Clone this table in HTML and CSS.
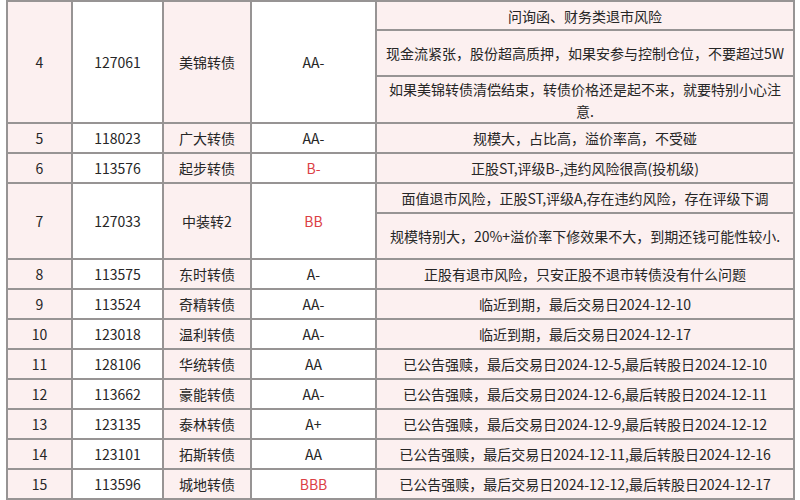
FILE: index.html
```html
<!DOCTYPE html>
<html lang="zh-CN">
<head>
<meta charset="utf-8">
<link rel="stylesheet" href="styles.css">
</head>
<body>
<table class="bonds">
  <colgroup>
    <col class="c-no"><col class="c-code"><col class="c-name"><col class="c-rate"><col class="c-note">
  </colgroup>
  <tbody>
    <tr class="h29">
      <td class="pink" rowspan="3">4</td>
      <td rowspan="3">127061</td>
      <td class="pink" rowspan="3">美锦转债</td>
      <td rowspan="3">AA-</td>
      <td class="pink note">问询函、财务类退市风险</td>
    </tr>
    <tr class="h46">
      <td class="pink note">现金流紧张，股份超高质押，如果安参与控制仓位，不要超过5W</td>
    </tr>
    <tr class="h47">
      <td class="pink note wrap">如果美锦转债清偿结束，转债价格还是起不来，就要特别小心注<br>意.</td>
    </tr>
    <tr class="h30">
      <td class="pink">5</td><td>118023</td><td class="pink">广大转债</td><td>AA-</td>
      <td class="pink note">规模大，占比高，溢价率高，不受碰</td>
    </tr>
    <tr class="h30">
      <td class="pink">6</td><td>113576</td><td class="pink">起步转债</td><td class="red">B-</td>
      <td class="pink note">正股ST,评级B-,违约风险很高(投机级)</td>
    </tr>
    <tr class="h30">
      <td class="pink" rowspan="2">7</td>
      <td rowspan="2">127033</td>
      <td class="pink" rowspan="2">中装转2</td>
      <td class="red" rowspan="2">BB</td>
      <td class="pink note">面值退市风险，正股ST,评级A,存在违约风险，存在评级下调</td>
    </tr>
    <tr class="h46">
      <td class="pink note">规模特别大，20%+溢价率下修效果不大，到期还钱可能性较小.</td>
    </tr>
    <tr class="h30">
      <td class="pink">8</td><td>113575</td><td class="pink">东时转债</td><td>A-</td>
      <td class="pink note">正股有退市风险，只安正股不退市转债没有什么问题</td>
    </tr>
    <tr class="h30">
      <td class="pink">9</td><td>113524</td><td class="pink">奇精转债</td><td>AA-</td>
      <td class="pink note">临近到期，最后交易日2024-12-10</td>
    </tr>
    <tr class="h30">
      <td class="pink">10</td><td>123018</td><td class="pink">温利转债</td><td>AA-</td>
      <td class="pink note">临近到期，最后交易日2024-12-17</td>
    </tr>
    <tr class="h30">
      <td class="pink">11</td><td>128106</td><td class="pink">华统转债</td><td>AA</td>
      <td class="pink note">已公告强赎，最后交易日2024-12-5,最后转股日2024-12-10</td>
    </tr>
    <tr class="h30">
      <td class="pink">12</td><td>113662</td><td class="pink">豪能转债</td><td>AA-</td>
      <td class="pink note">已公告强赎，最后交易日2024-12-6,最后转股日2024-12-11</td>
    </tr>
    <tr class="h30">
      <td class="pink">13</td><td>123135</td><td class="pink">泰林转债</td><td>A+</td>
      <td class="pink note">已公告强赎，最后交易日2024-12-9,最后转股日2024-12-12</td>
    </tr>
    <tr class="h30">
      <td class="pink">14</td><td>123101</td><td class="pink">拓斯转债</td><td>AA</td>
      <td class="pink note">已公告强赎，最后交易日2024-12-11,最后转股日2024-12-16</td>
    </tr>
    <tr class="h30">
      <td class="pink">15</td><td>113596</td><td class="pink">城地转债</td><td class="red">BBB</td>
      <td class="pink note">已公告强赎，最后交易日2024-12-12,最后转股日2024-12-17</td>
    </tr>
  </tbody>
</table>
</body>
</html>
```

FILE: styles.css
```css
html, body {
  margin: 0;
  padding: 0;
  background: #ffffff;
  overflow: hidden;
}

body {
  width: 800px;
  height: 500px;
  font-family: "Noto Sans CJK SC", "Noto Sans", sans-serif;
  font-size: 14px;
  color: #262626;
}

.bonds {
  margin: 0 0 0 6px;
  border-collapse: collapse;
  table-layout: fixed;
  width: 787px;
}

.c-no { width: 65px; }
.c-code { width: 91px; }
.c-name { width: 88px; }
.c-rate { width: 125px; }
.c-note { width: 418px; }

.bonds td {
  border: 2px solid #979494;
  text-align: center;
  vertical-align: middle;
  padding: 0 4px;
  line-height: 22px;
  background: #ffffff;
  white-space: nowrap;
  overflow: hidden;
}

.bonds td.pink {
  background: #fcf0f0;
}

.bonds td.red {
  color: #dc3f45;
}

.bonds td.wrap {
  white-space: normal;
}

.h29 { height: 29px; }
.h30 { height: 30px; }
.h46 { height: 46px; }
.h47 { height: 47px; }
```
